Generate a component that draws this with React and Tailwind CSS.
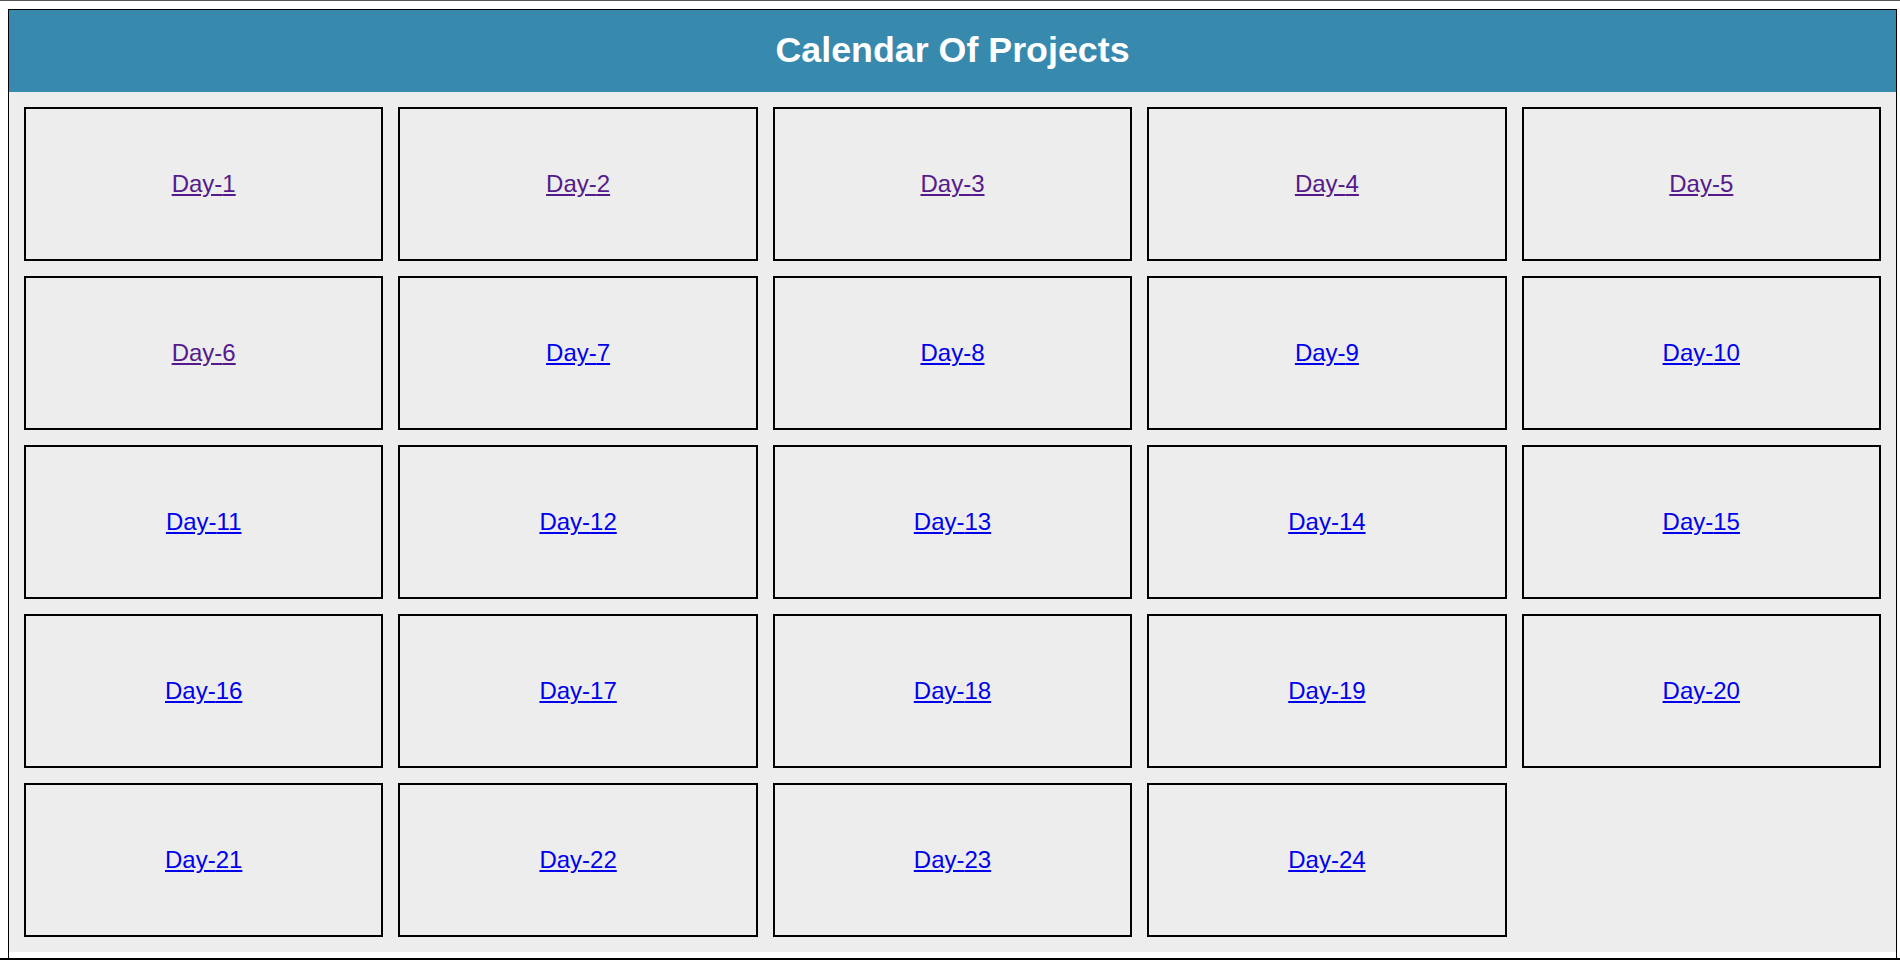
import React from 'react';

const days = Array.from({ length: 24 }, (_, i) => i + 1);

const App = () => {
  return (
    <div
      className="h-[960px] w-[1900px] bg-white border-t border-[#555555] border-b-2 border-b-black pt-[8px] flex flex-col"
      style={{ fontFamily: '"Liberation Sans", Arial, sans-serif' }}
    >
      <div className="ml-[8px] w-[1889px] flex-1 border-x border-t border-black flex flex-col pb-[6px]">
        {/* header */}
        <div className="h-[82px] bg-[#3889ae] flex items-center justify-center">
          <h1 className="text-white text-[35.8px] font-bold">Calendar Of Projects</h1>
        </div>

        {/* grid of days */}
        <div className="bg-[#ededed] p-[15px] grid grid-cols-5 gap-[15px]">
          {days.map((d) => (
            <div
              key={d}
              className="h-[154px] border-2 border-black flex items-center justify-center"
            >
              <a
                href="#"
                className={`text-[24px] underline ${d <= 6 ? 'text-[#551a8b]' : 'text-[#0000ee]'}`}
              >
                Day-{d}
              </a>
            </div>
          ))}
        </div>
      </div>
    </div>
  );
};

export default App;
